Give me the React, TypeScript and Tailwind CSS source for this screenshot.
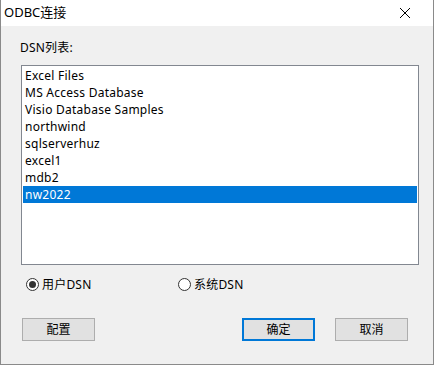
import { useState } from 'react'

const items = [
  'Excel Files',
  'MS Access Database',
  'Visio Database Samples',
  'northwind',
  'sqlserverhuz',
  'excel1',
  'mdb2',
  'nw2022',
]

const font = { fontFamily: '"Noto Sans", "Noto Sans CJK SC", sans-serif' }

function Radio({ checked, label }: { checked: boolean; label: string }) {
  return (
    <div className="flex items-center gap-[3px]">
      <span className="flex h-[13px] w-[13px] items-center justify-center rounded-full border border-[#333] bg-white">
        {checked && <span className="h-[7px] w-[7px] rounded-full bg-[#333]" />}
      </span>
      <span className="text-[12px] leading-none tracking-[0.2px] text-black">{label}</span>
    </div>
  )
}

function Button({ label, primary }: { label: string; primary?: boolean }) {
  return (
    <button
      className={
        'flex h-[23px] w-[73px] items-center justify-center bg-[#e1e1e1] text-[12px] text-black ' +
        (primary ? 'border-2 border-[#0078d7]' : 'border border-[#adadad]')
      }
    >
      {label}
    </button>
  )
}

export default function App() {
  const [selected] = useState('nw2022')

  return (
    <div className="flex h-[365px] w-[434px] flex-col border-x border-b border-[#8a8a8a] bg-[#f0f0f0]" style={font}>
      <div className="flex h-[26px] shrink-0 items-center justify-between bg-white pl-[3px] pr-[22px]">
        <span className="text-[13px] text-black">ODBC连接</span>
        <svg width="12" height="12" viewBox="0 0 12 12" className="text-black">
          <path d="M1 1 L11 11 M11 1 L1 11" stroke="currentColor" strokeWidth="1" />
        </svg>
      </div>

      <div className="flex flex-col px-[19px]">
        <div className="mt-[14px] h-[16px] text-[12px] leading-[16px] tracking-[0.2px] text-black">DSN列表:</div>
        <div className="mt-[9px] ml-[1px] h-[200px] w-[398px] border border-[#828790] bg-white p-[1px]">
          {items.map((it) => (
            <div
              key={it}
              className={
                'h-[17px] pl-[2px] text-[12px] leading-[17px] tracking-[0.25px] ' +
                (it === selected ? 'bg-[#0078d7] text-white' : 'text-black')
              }
            >
              {it}
            </div>
          ))}
        </div>

        <div className="mt-[13px] flex items-center pl-[6px]">
          <div className="w-[152px]">
            <Radio checked label="用户DSN" />
          </div>
          <Radio checked={false} label="系统DSN" />
        </div>

        <div className="mt-[27px] flex items-center pl-[2px]">
          <Button label="配置" />
          <div className="ml-[147px]">
            <Button label="确定" primary />
          </div>
          <div className="ml-[20px]">
            <Button label="取消" />
          </div>
        </div>
      </div>
    </div>
  )
}
